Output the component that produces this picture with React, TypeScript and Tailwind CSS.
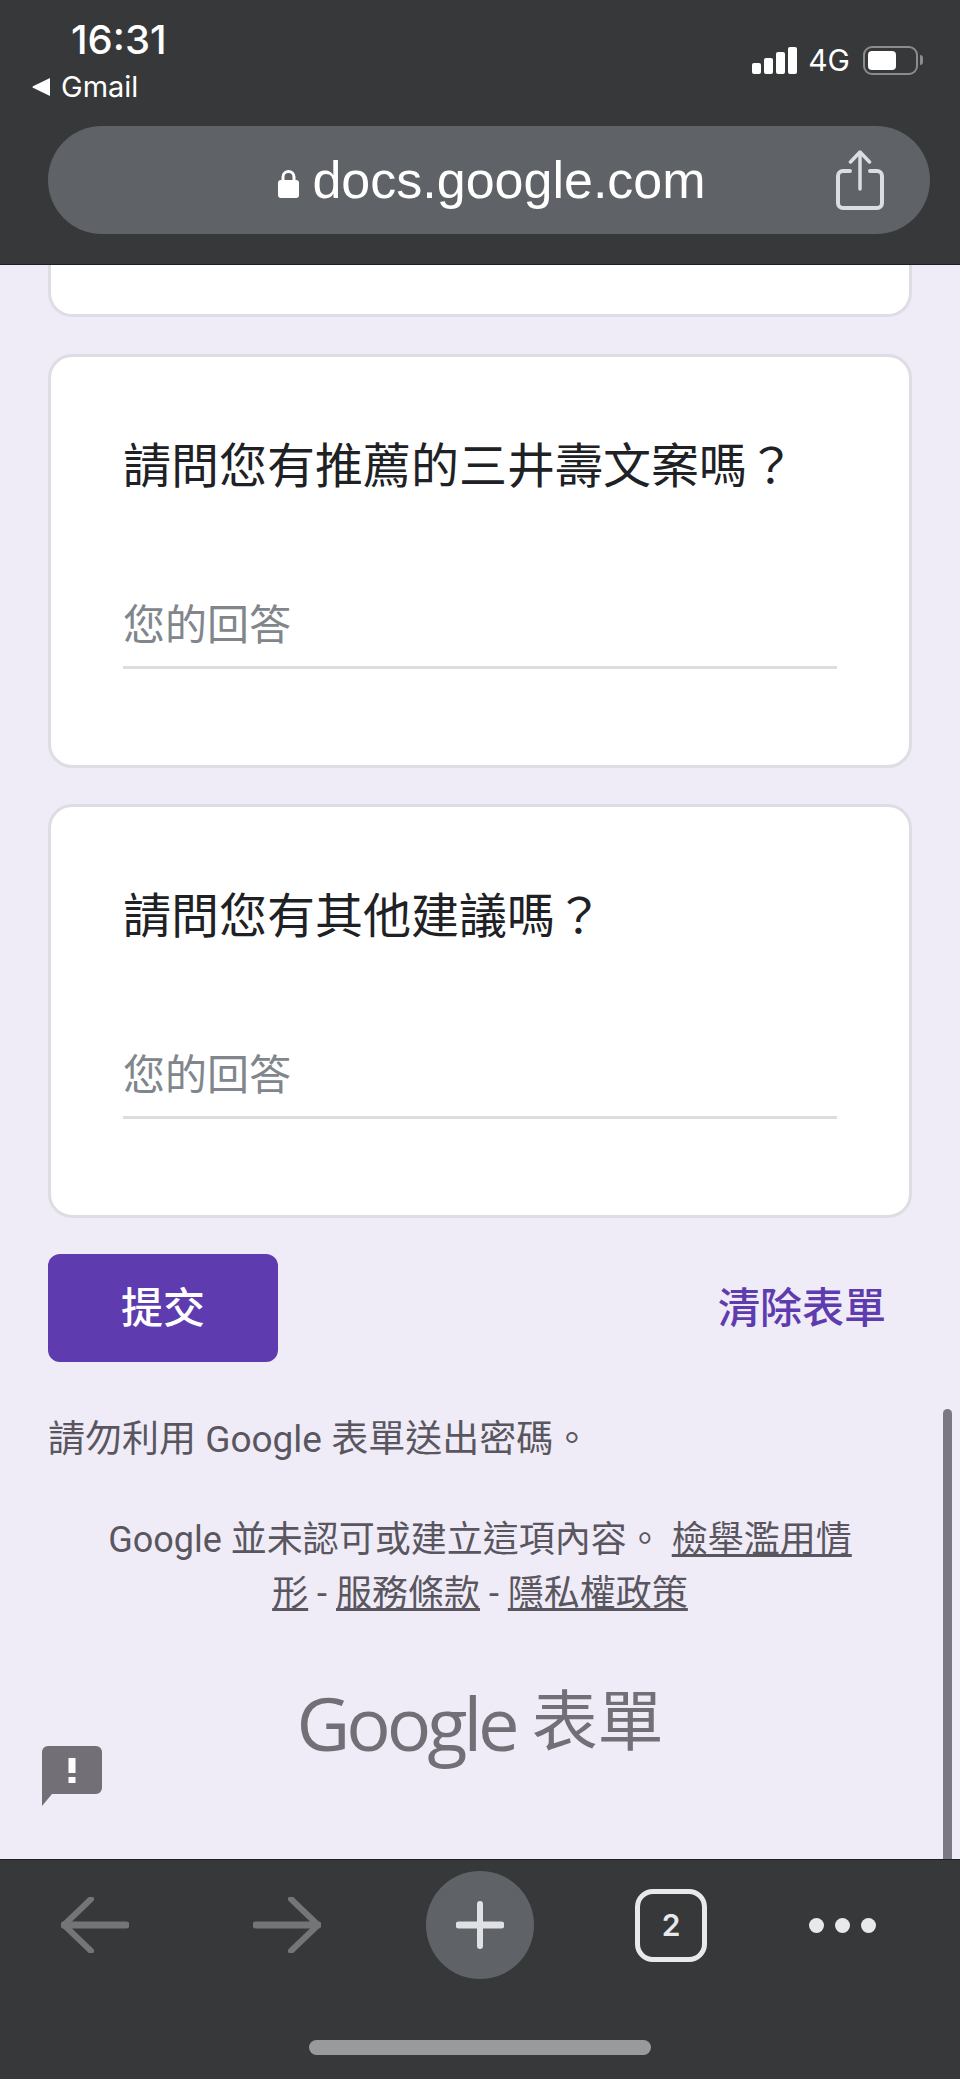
const cjk = "font-['Roboto','Noto_Sans_CJK_TC',sans-serif]";

function StatusBar() {
  return (
    <div className="flex h-[103px] justify-between">
      <div className="flex flex-col">
        <span className="pl-[71px] pt-[20px] font-['Inter',sans-serif] text-[40px] leading-[40px] font-medium text-white">
          16:31
        </span>
        <div className="mt-[11px] flex h-[32px] items-center gap-[11px] pl-[32px]">
          <svg width="18" height="18" viewBox="0 0 18 18">
            <path d="M18 0v18L1 9.8a1 1 0 0 1 0-1.6z" fill="#fff" />
          </svg>
          <span className="font-['Inter',sans-serif] text-[29px] leading-[32px] text-white">Gmail</span>
        </div>
      </div>
      <div className="mt-[45px] flex h-[30px] items-center pr-[37px]">
        <div className="flex items-end gap-[3px]">
          <span className="h-[11px] w-[9px] rounded-[2px] bg-white" />
          <span className="h-[16px] w-[9px] rounded-[2px] bg-white" />
          <span className="h-[22px] w-[9px] rounded-[2px] bg-white" />
          <span className="h-[27px] w-[9px] rounded-[2px] bg-white" />
        </div>
        <span className="ml-[11px] font-['Inter',sans-serif] text-[30px] leading-[30px] text-white">4G</span>
        <div className="ml-[13px] flex h-[29px] w-[55px] items-center rounded-[9px] border-[2px] border-[#8b8c8e] p-[3px]">
          <span className="h-[19px] w-[28px] rounded-[4px] bg-white" />
        </div>
        <span className="ml-[2px] h-[10px] w-[3px] rounded-r-full bg-[#8b8c8e]" />
      </div>
    </div>
  );
}

function AddressBar() {
  return (
    <div className="mt-[23px] ml-[48px] grid h-[108px] w-[882px] grid-cols-[1fr_auto_1fr] items-center rounded-[54px] bg-[#5f6266]">
      <div />
      <div className="flex items-center gap-[13px] pl-[6px]">
        <svg width="21" height="29" viewBox="0 0 21 29" className="mt-[6px]">
          <path d="M5 13V8a5.500 5.500 0 0 1 11 0v5" fill="none" stroke="#fff" strokeWidth="3" />
          <rect x="0" y="11" width="21" height="18" rx="3" fill="#fff" />
        </svg>
        <span className="font-['Liberation_Sans',sans-serif] text-[52px] leading-[60px] text-white">
          docs.google.com
        </span>
      </div>
      <div className="flex justify-end pr-[46px]">
        <svg width="48" height="60" viewBox="0 0 48 60" fill="none" stroke="#dcdde0" strokeLinecap="round">
          <path d="M14 21H7a5 5 0 0 0-5 5v27a5 5 0 0 0 5 5h34a5 5 0 0 0 5-5V26a5 5 0 0 0-5-5h-7" strokeWidth="4" />
          <path d="M24 3v36" strokeWidth="3.500" />
          <path d="M14.500 12 24 2l9.500 10" strokeWidth="3.500" strokeLinejoin="round" />
        </svg>
      </div>
    </div>
  );
}

function QuestionCard({ title }: { title: string }) {
  return (
    <div className="mt-[37px] rounded-[24px] border-[3px] border-[#dddde3] bg-white pt-[80px] pr-[72px] pb-[96px] pl-[72px]">
      <div className={`${cjk} text-[48px] leading-[60px] text-[#202124]`}>{title}</div>
      <div className={`${cjk} mt-[104px] mb-[15px] text-[42px] leading-[50px] text-[#80868b]`}>您的回答</div>
      <div className="border-b-[3px] border-[#dddde0]" />
    </div>
  );
}

function Footer() {
  return (
    <>
      <div className="mt-[36px] flex h-[108px] items-center justify-between">
        <button className={`${cjk} h-[108px] w-[230px] rounded-[12px] bg-[#5e3bae] text-[42px] font-medium text-white`}>
          提交
        </button>
        <span className={`${cjk} pr-[26px] text-[42px] font-medium text-[#5e3bae]`}>清除表單</span>
      </div>
      <p className={`${cjk} mt-[51px] text-[37px] leading-[54px] text-[#5a565f]`}>請勿利用 Google 表單送出密碼。</p>
      <p className={`${cjk} mx-auto mt-[46px] w-[760px] text-center text-[36px] leading-[54px] text-[#5a565f]`}>
        Google 並未認可或建立這項內容。 <a className="underline">檢舉濫用情形</a> - <a className="underline">服務條款</a> -{" "}
        <a className="underline">隱私權政策</a>
      </p>
      <div className="mt-[54px] flex items-center justify-center gap-[16px] text-[#727076]">
        <span className="font-['Open_Sans',sans-serif] text-[74px] leading-[96px] font-medium tracking-[-4px]">Google</span>
        <span className={`${cjk} text-[66px] leading-[96px]`}>表單</span>
      </div>
    </>
  );
}

function FeedbackIcon() {
  return (
    <svg width="60" height="60" viewBox="0 0 60 60" className="absolute top-[1481px] left-[42px]">
      <path d="M0 6a6 6 0 0 1 6-6h48a6 6 0 0 1 6 6v36a6 6 0 0 1-6 6H10L0 60z" fill="#727076" />
      <rect x="26.500" y="12" width="7" height="15" fill="#fff" />
      <rect x="26.500" y="31" width="7" height="6" fill="#fff" />
    </svg>
  );
}

function BottomBar() {
  return (
    <div className="relative h-[220px] border-t border-[#1f2023] bg-[#37383a]">
      <div className="flex h-[120px] items-center pt-[10px]">
        <svg width="68" height="56" viewBox="0 0 68 56" fill="none" stroke="#747577" strokeLinecap="round" strokeLinejoin="round" className="ml-[61px]">
          <path d="M3 28h62" strokeWidth="7" />
          <path d="M30 2 3 28l27 26" strokeWidth="6" />
        </svg>
        <svg width="68" height="56" viewBox="0 0 68 56" fill="none" stroke="#747577" strokeLinecap="round" strokeLinejoin="round" className="ml-[124px]">
          <path d="M3 28h62" strokeWidth="7" />
          <path d="m38 2 27 26-27 26" strokeWidth="6" />
        </svg>
        <div className="ml-[105px] flex h-[108px] w-[108px] items-center justify-center rounded-full bg-[#5f6266]">
          <svg width="48" height="48" viewBox="0 0 48 48" stroke="#e0e1e4" strokeLinecap="round">
            <path d="M24 3v42" strokeWidth="6" />
            <path d="M3 24h42" strokeWidth="7" />
          </svg>
        </div>
        <div className="ml-[101px] flex h-[73px] w-[72px] items-center justify-center rounded-[18px] border-[5px] border-[#e8e9eb] font-['Inter',sans-serif] text-[30px] font-semibold text-[#e8e9eb]">
          2
        </div>
        <div className="ml-[102px] flex items-center gap-[11px]">
          <span className="h-[15px] w-[15px] rounded-full bg-[#e8e9eb]" />
          <span className="h-[15px] w-[15px] rounded-full bg-[#e8e9eb]" />
          <span className="h-[15px] w-[15px] rounded-full bg-[#e8e9eb]" />
        </div>
      </div>
      <div className="mx-auto mt-[60px] h-[15px] w-[342px] rounded-[8px] bg-[#9a9a9a]" />
    </div>
  );
}

export default function App() {
  return (
    <div className="flex h-[2079px] w-[960px] flex-col overflow-hidden bg-[#efecf7]">
      <header className="h-[265px] shrink-0 border-b border-[#1f2023] bg-[#37383a]">
        <StatusBar />
        <AddressBar />
      </header>
      <main className="relative flex-1 overflow-hidden px-[48px]">
        <div className="h-[52px] w-full rounded-b-[24px] border-[3px] border-t-0 border-[#dddde3] bg-white" />
        <QuestionCard title="請問您有推薦的三井壽文案嗎？" />
        <div className="-mt-px">
          <QuestionCard title="請問您有其他建議嗎？" />
        </div>
        <Footer />
        <FeedbackIcon />
        <div className="absolute top-[1144px] right-[8px] bottom-0 w-[9px] rounded-t-full bg-[#7a7880]" />
      </main>
      <BottomBar />
    </div>
  );
}
